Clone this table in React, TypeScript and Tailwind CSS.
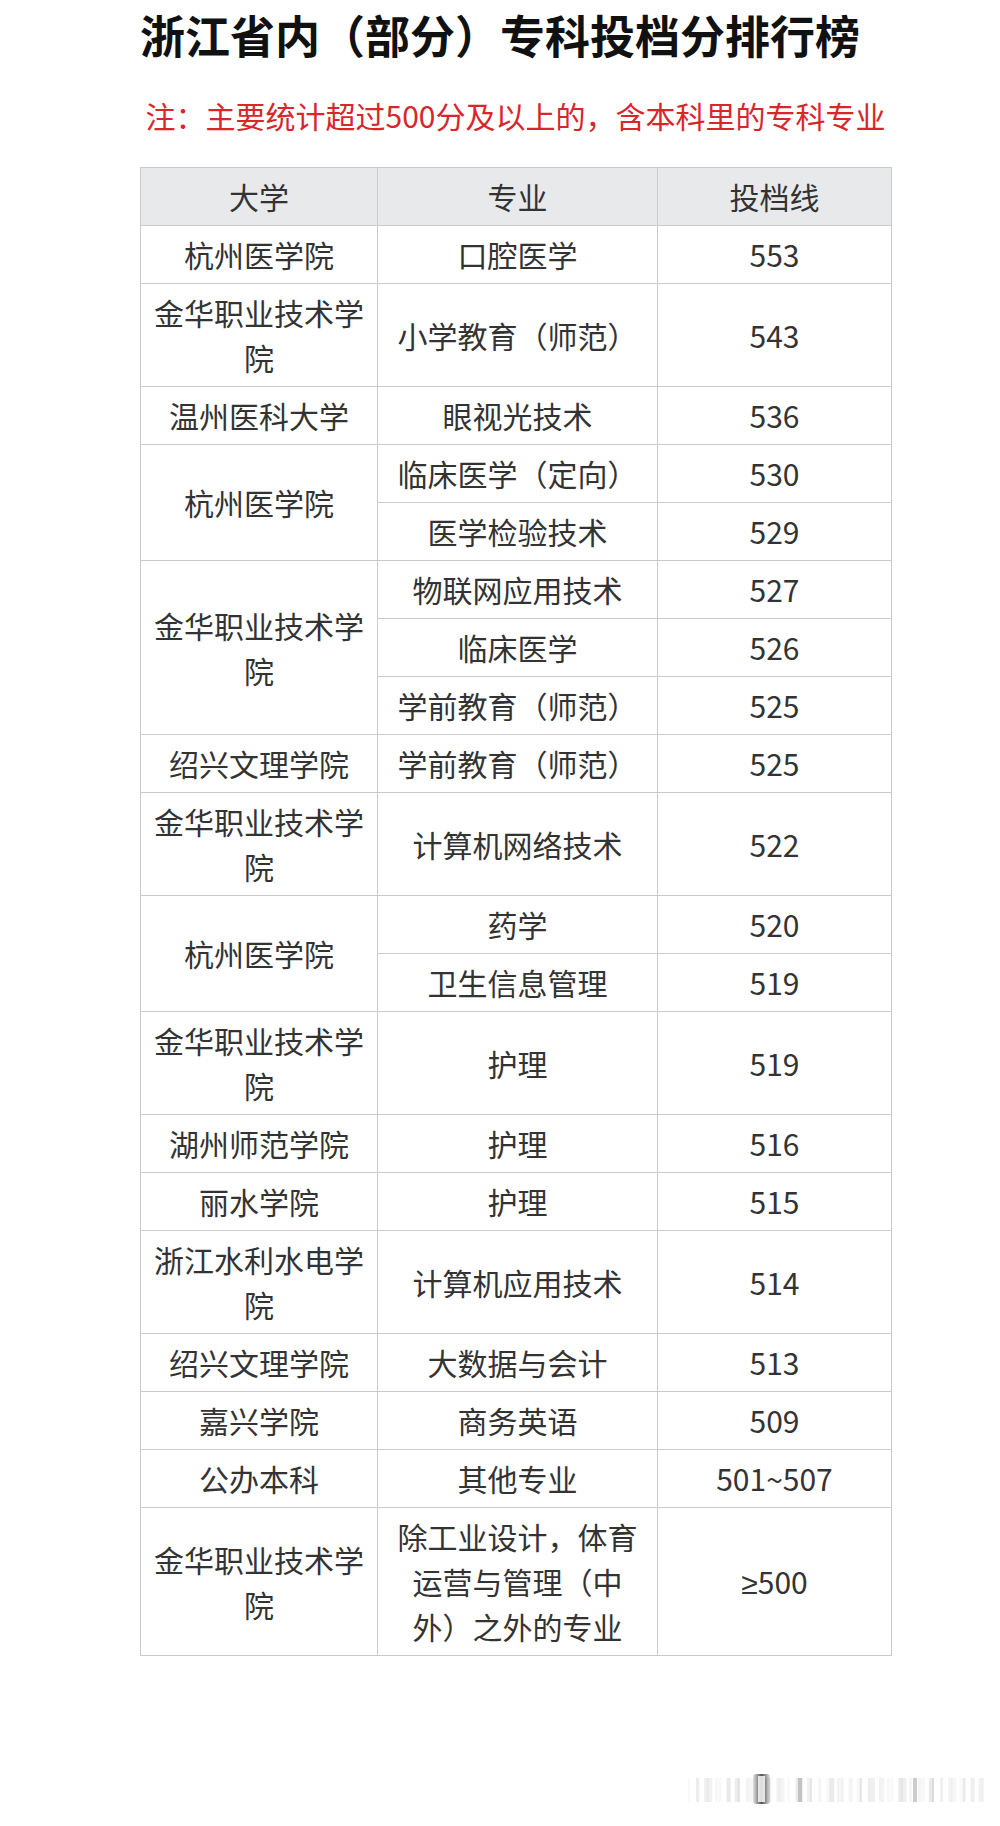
import React from 'react'

type Row = {
  school?: string
  span?: number
  major: string
  score: React.ReactNode
}

const rows: Row[] = [
  { school: '杭州医学院', major: '口腔医学', score: '553' },
  { school: '金华职业技术学院', major: '小学教育（师范）', score: '543' },
  { school: '温州医科大学', major: '眼视光技术', score: '536' },
  { school: '杭州医学院', span: 2, major: '临床医学（定向）', score: '530' },
  { major: '医学检验技术', score: '529' },
  { school: '金华职业技术学院', span: 3, major: '物联网应用技术', score: '527' },
  { major: '临床医学', score: '526' },
  { major: '学前教育（师范）', score: '525' },
  { school: '绍兴文理学院', major: '学前教育（师范）', score: '525' },
  { school: '金华职业技术学院', major: '计算机网络技术', score: '522' },
  { school: '杭州医学院', span: 2, major: '药学', score: '520' },
  { major: '卫生信息管理', score: '519' },
  { school: '金华职业技术学院', major: '护理', score: '519' },
  { school: '湖州师范学院', major: '护理', score: '516' },
  { school: '丽水学院', major: '护理', score: '515' },
  { school: '浙江水利水电学院', major: '计算机应用技术', score: '514' },
  { school: '绍兴文理学院', major: '大数据与会计', score: '513' },
  { school: '嘉兴学院', major: '商务英语', score: '509' },
  { school: '公办本科', major: '其他专业', score: '501~507' },
  {
    school: '金华职业技术学院',
    major: '除工业设计，体育运营与管理（中外）之外的专业',
    score: (
      <>
        <span className="font-['Noto_Sans',sans-serif]">≥</span>500
      </>
    ),
  },
]

const cell = 'border border-[#c9cacc] px-[11px] py-[6px] text-center align-middle'

// blurred watermark strip at the bottom right
function Watermark() {
  const bars = Array.from({ length: 48 }, (_, i) => {
    const x = i * 6.1 + ((i * 37) % 5)
    const o = 0.05 + (((i * 53) % 11) / 11) * 0.14
    return { x, o, w: 2 + ((i * 17) % 4) }
  })
  return (
    <svg width="296" height="34" viewBox="0 0 296 34" aria-hidden>
      <defs>
        <linearGradient id="wm" x1="0" y1="0" x2="1" y2="0">
          <stop offset="0" stopColor="#000" stopOpacity="0.15" />
          <stop offset="0.5" stopColor="#000" stopOpacity="0.9" />
          <stop offset="1" stopColor="#000" stopOpacity="0.15" />
        </linearGradient>
      </defs>
      {bars.map((b, i) => (
        <rect key={i} x={b.x} y={6} width={b.w} height={24} fill="#888" opacity={b.o} />
      ))}
      <rect x="65" y="2" width="17" height="30" rx="3" fill="url(#wm)" opacity="0.75" />
      <rect x="70" y="4" width="7" height="26" fill="#fff" opacity="0.8" />
      <rect x="110" y="6" width="4" height="24" fill="#000" opacity="0.18" />
      <rect x="225" y="6" width="4" height="24" fill="#000" opacity="0.2" />
    </svg>
  )
}

export default function App() {
  return (
    <div className="h-[1826px] w-[1000px] bg-white font-['Noto_Sans_CJK_SC','Noto_Sans',sans-serif] text-[#333]">
      <h1 className="flex h-[70px] items-center justify-center text-[45px] font-bold leading-[70px] text-[#111]">
        浙江省内（部分）专科投档分排行榜
      </h1>
      <p className="ml-[140px] mt-[23px] w-[751px] text-center text-[30px] leading-[45px] text-[#d8262b]">
        注：主要统计超过500分及以上的，含本科里的专科专业
      </p>
      <table className="ml-[140px] mt-[29px] w-[751px] table-fixed border-collapse text-[30px] leading-[45px]">
        <colgroup>
          <col className="w-[237px]" />
          <col className="w-[280px]" />
          <col className="w-[234px]" />
        </colgroup>
        <thead>
          <tr className="bg-[#e8e9eb]">
            <th className={`${cell} font-normal`}>大学</th>
            <th className={`${cell} font-normal`}>专业</th>
            <th className={`${cell} font-normal`}>投档线</th>
          </tr>
        </thead>
        <tbody>
          {rows.map((r, i) => (
            <tr key={i}>
              {r.school && (
                <td className={cell} rowSpan={r.span ?? 1}>
                  {r.school}
                </td>
              )}
              <td className={`${cell} px-[16px]`}>{r.major}</td>
              <td className={cell}>{r.score}</td>
            </tr>
          ))}
        </tbody>
      </table>
      <div className="ml-[688px] mt-[116px]">
        <Watermark />
      </div>
    </div>
  )
}
